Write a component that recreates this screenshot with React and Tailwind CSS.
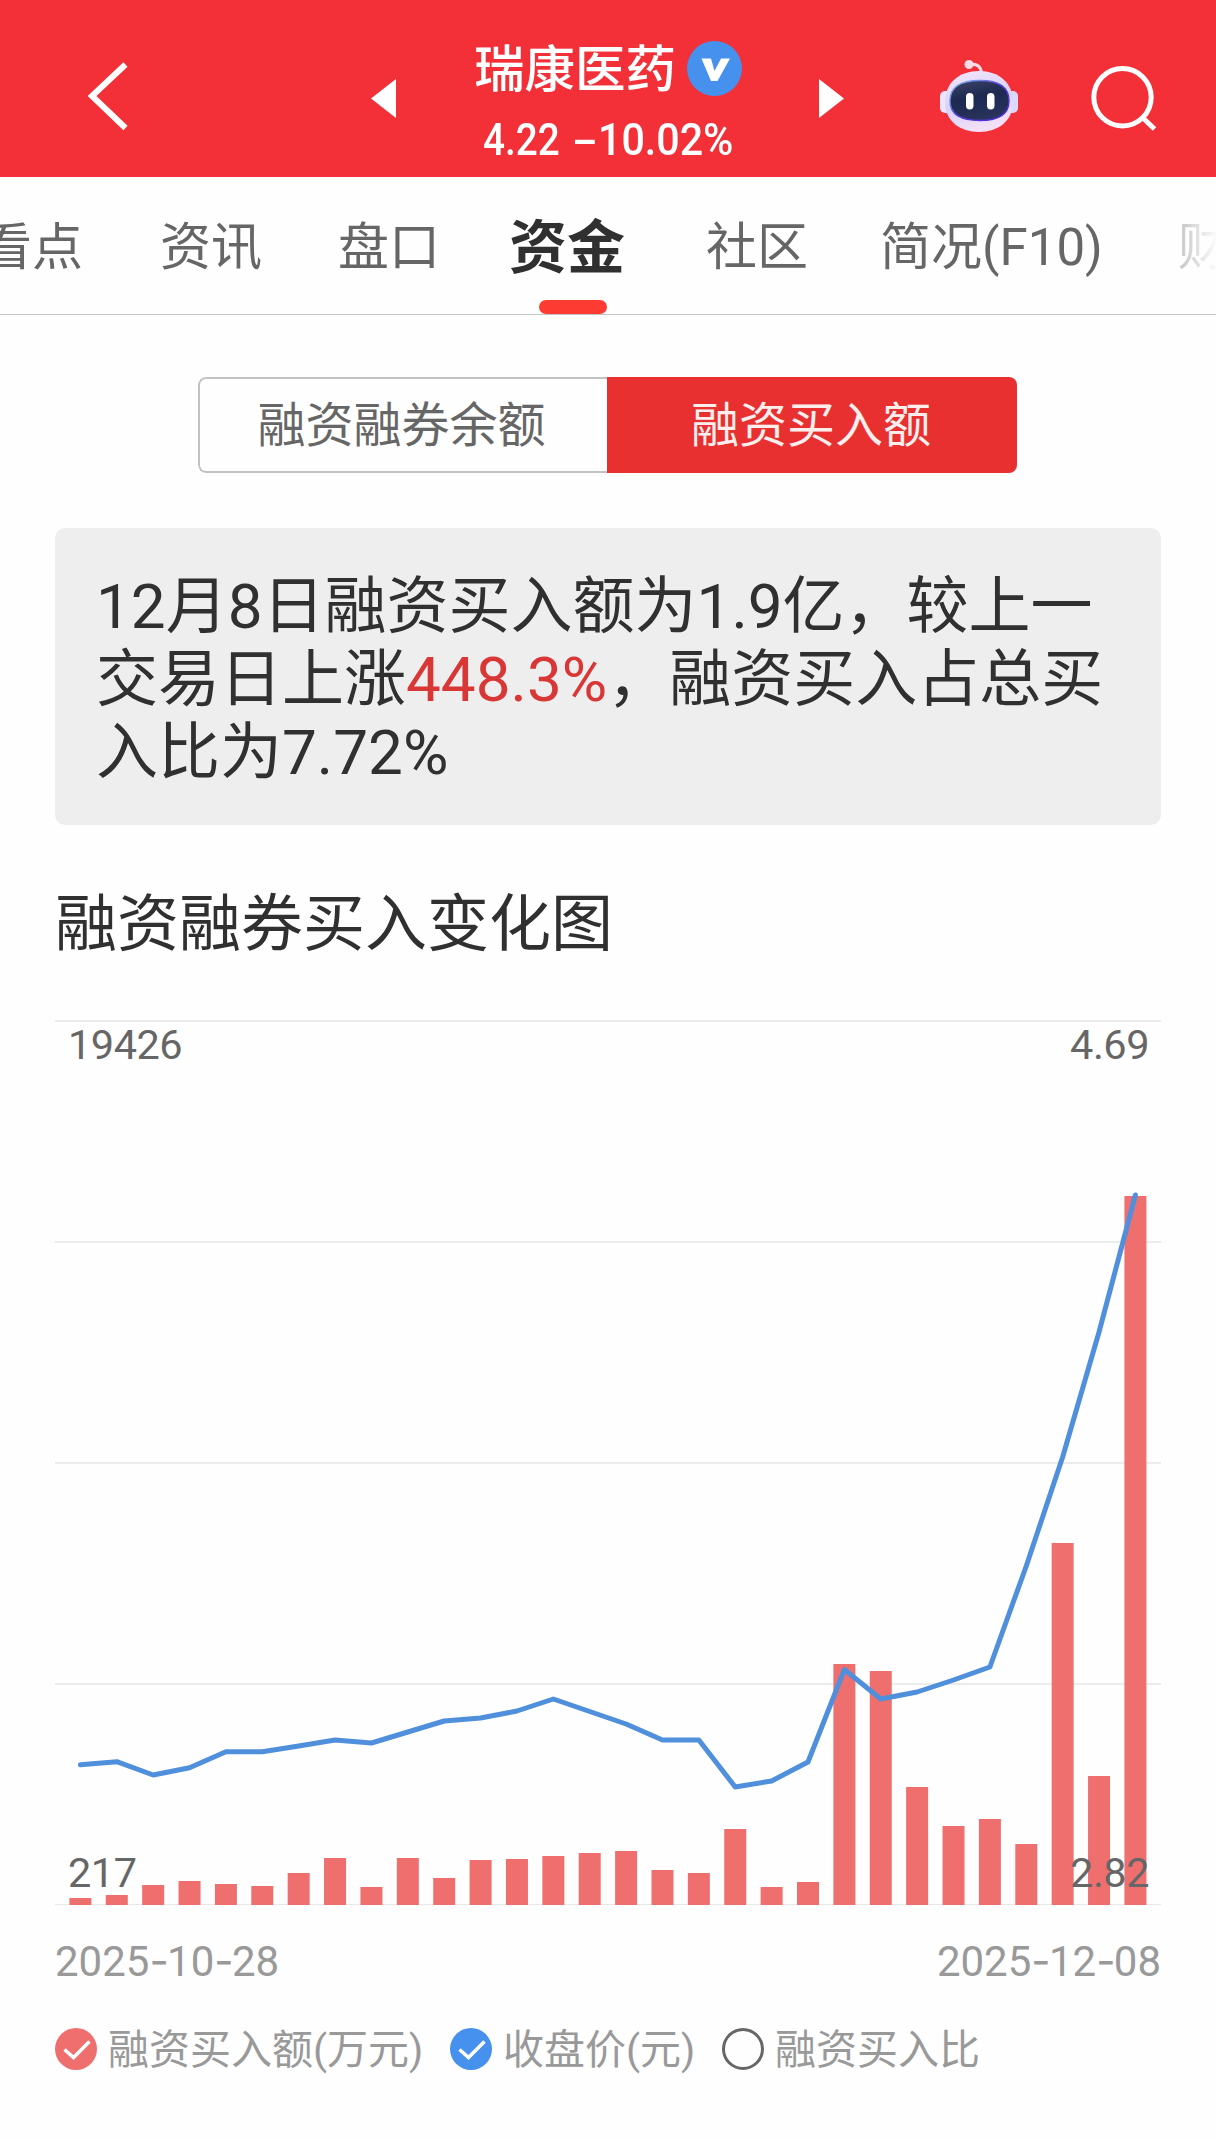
import React from "react";

const FONT = "font-['Roboto','Noto_Sans_CJK_SC',sans-serif]";

const TABS = [
  { label: "看点", cls: "-ml-[19px]" },
  { label: "资讯", cls: "ml-[77px]" },
  { label: "盘口", cls: "ml-[76px]" },
  { label: "资金", cls: "ml-[69px]", active: true },
  { label: "社区", cls: "ml-[81px]" },
  { label: "简况(F10)", cls: "ml-[72px]" },
];

const BASE = 884;
const FIRST = 25.4;
const STEP = 36.38;
const BAR_HEIGHTS = [
  7, 10, 20, 24, 21, 19, 32, 47, 18, 47, 27, 45, 46, 49, 52, 54, 35, 32, 76, 18,
  23, 241, 234, 118, 79, 86, 61, 362, 129, 709,
];
const PRICE_Y = [
  744.7, 741.7, 755, 747.7, 731.7, 731.7, 726, 720, 723, 712, 701, 698, 691,
  679, 691.5, 704, 720, 720, 767, 761, 742, 649.5, 679, 672, 660, 647, 546, 437,
  312, 175,
];

function Header() {
  return (
    <header className="flex h-[177px] items-start bg-[#f32f37] text-white">
      <svg className="ml-[84px] mt-[58px] h-[76px] w-[48px]" viewBox="0 0 48 76" fill="none" stroke="currentColor" strokeWidth="6">
        <path d="M41.500 6.500 L8 38 L41.500 70" />
      </svg>
      <svg className="ml-[239px] mt-[79px] h-[39px] w-[25px]" viewBox="0 0 25 39" fill="currentColor">
        <path d="M25 0V39L0 19.500Z" />
      </svg>
      <div className="ml-[78px] flex w-[272px] flex-col">
        <div className="mt-[40px] flex h-[56px] items-center">
          <h1 className="pt-[4px] text-[50.5px] leading-[56px] font-medium whitespace-nowrap">瑞康医药</h1>
          <svg className="ml-[11px] h-[55px] w-[55px] shrink-0" viewBox="0 0 55 55">
            <circle cx="27.500" cy="27.500" r="27.500" fill="#4690ee" />
            <path d="M14.500 17.500H24L27.500 30L34 17.500H43L30.500 40H24Z" fill="#fff" />
          </svg>
        </div>
        <div className="mt-[18px] ml-[9px] flex h-[52px] items-center text-[45px] leading-[52px] font-medium whitespace-nowrap">
          <span className="w-[91px] origin-left scale-x-[0.86]">4.22</span>
          <span className="w-[27px] origin-left scale-x-[1.7]">-</span>
          <span className="origin-left scale-x-[0.915]">10.02%</span>
        </div>
      </div>
      <svg className="ml-[73px] mt-[79px] h-[39px] w-[25px]" viewBox="0 0 25 39" fill="currentColor">
        <path d="M0 0V39L25 19.500Z" />
      </svg>
      <svg className="ml-[93px] mt-[58px] h-[78px] w-[84px]" viewBox="0 0 84 78">
        <defs>
          <linearGradient id="shell" x1="0" y1="0" x2="0.3" y2="1">
            <stop offset="0" stopColor="#f6e6fb" />
            <stop offset="0.6" stopColor="#d6d3f8" />
            <stop offset="1" stopColor="#f3e0f6" />
          </linearGradient>
          <linearGradient id="rim" x1="0" y1="0" x2="1" y2="1">
            <stop offset="0" stopColor="#86c8ee" />
            <stop offset="0.5" stopColor="#5a3ee0" />
            <stop offset="1" stopColor="#4c2ad0" />
          </linearGradient>
          <linearGradient id="visor" x1="0" y1="0" x2="0.3" y2="1">
            <stop offset="0" stopColor="#3d4569" />
            <stop offset="0.5" stopColor="#1d2950" />
            <stop offset="1" stopColor="#28325c" />
          </linearGradient>
        </defs>
        <path d="M32 7C39 5 44 8 44.500 15" fill="none" stroke="#fbdbe6" strokeWidth="3" />
        <circle cx="32" cy="6.500" r="4.500" fill="#fbdbe6" />
        <rect x="3" y="33" width="12" height="22" rx="5" fill="#eee4fc" />
        <rect x="69" y="33" width="12" height="22" rx="5" fill="#dcd8fb" />
        <path d="M42 13C62 13 76 25 76 44C76 63 61 74 42 74C23 74 8 63 8 44C8 25 22 13 42 13Z" fill="url(#shell)" />
        <path d="M43 22.500C61 22.500 72 28 72 43C72 57 61 62.500 43 62.500C24 62.500 13 57 13 43C13 28 24 22.500 43 22.500Z" fill="url(#visor)" stroke="url(#rim)" strokeWidth="1.400" />
        <rect x="29" y="35" width="7.500" height="16.500" rx="3.700" fill="#fff" />
        <rect x="50" y="35" width="7.500" height="16.500" rx="3.700" fill="#fff" />
      </svg>
      <svg className="ml-[69px] mt-[62px] h-[72px] w-[72px]" viewBox="0 0 72 72" fill="none" stroke="currentColor" strokeWidth="5">
        <circle cx="32.500" cy="35.300" r="28.700" />
        <path d="M52 55L64.500 67" />
      </svg>
    </header>
  );
}

function Tabs() {
  return (
    <nav className="flex h-[138px] items-start overflow-hidden border-b border-[#c4c4c4] text-[51px] leading-[60px] whitespace-nowrap text-[#666]">
      {TABS.map((t) =>
        t.active ? (
          <div key={t.label} className={`${t.cls} flex shrink-0 flex-col items-center`}>
            <span className="mt-[41px] text-[58px] leading-[60px] font-bold text-[#303030]">{t.label}</span>
            <span className="mt-[22px] ml-[11px] h-[14px] w-[68px] rounded-full bg-[#fe3b32]" />
          </div>
        ) : (
          <span key={t.label} className={`${t.cls} mt-[41px] shrink-0`}>{t.label}</span>
        )
      )}
      <span className="mt-[41px] ml-[75px] shrink-0 bg-linear-to-r from-[#c4c4c4] to-white to-80% bg-clip-text text-transparent">财</span>
    </nav>
  );
}

function Chart() {
  const points = PRICE_Y.map((y, i) => `${FIRST + i * STEP},${y}`).join(" ");
  return (
    <div className="relative mt-[57px] h-[886px] text-[41.5px] leading-[44px] tracking-[-0.500px] text-[#666]">
      <svg className="block h-[886px] w-[1106px]" viewBox="0 0 1106 886" fill="none">
        {[0, 221, 442, 663].map((y) => (
          <path key={y} d={`M0 ${y + 1}H1106`} stroke="#ececec" strokeWidth="2" />
        ))}
        <path d="M0 884.500H1106" stroke="#e8e8e8" />
        {BAR_HEIGHTS.map((h, i) => (
          <rect key={i} x={FIRST + i * STEP - 11} y={BASE - h + 1} width="22" height={h} fill="#ef6f6f" />
        ))}
        <polyline points={points} stroke="#4f8fdc" strokeWidth="5" strokeLinejoin="round" strokeLinecap="round" />
      </svg>
      <span className="absolute top-[3px] left-[13px]">19426</span>
      <span className="absolute top-[3px] right-[12px]">4.69</span>
      <span className="absolute bottom-[11px] left-[13px]">217</span>
      <span className="absolute right-[12px] bottom-[11px]">2.82</span>
    </div>
  );
}

function DateLabel({ parts }) {
  return (
    <span>
      {parts.map((p, i) => (
        <React.Fragment key={i}>
          {i > 0 && <span className="font-['Inter',sans-serif] tracking-[-1.700px]">-</span>}
          {p}
        </React.Fragment>
      ))}
    </span>
  );
}

function Check({ className }) {
  return (
    <span className={`flex h-[42px] w-[42px] shrink-0 items-center justify-center rounded-full ${className}`}>
      <svg className="h-[42px] w-[42px]" viewBox="0 0 42 42" fill="none" stroke="#fff" strokeWidth="3.500">
        <path d="M9.500 21.500L18.500 29.500L34.500 13.500" />
      </svg>
    </span>
  );
}

export default function App() {
  return (
    <div lang="zh-CN" className={`h-[2140px] w-[1216px] overflow-hidden bg-[#fefefe] ${FONT}`}>
      <Header />
      <Tabs />
      <main className="px-[55px]">
        <div className="mt-[62px] ml-[143px] flex h-[96px] w-[819px] overflow-hidden rounded-[8px] text-[48px]">
          <button className="flex w-[409px] items-center justify-center rounded-l-[8px] border-2 border-r-0 border-[#c2c2c2] pt-[2px] pr-[4px] text-[#666]">融资融券余额</button>
          <button className="flex w-[410px] items-center justify-center bg-[#e83030] pt-[2px] pr-[2px] text-[#fdeeee]">融资买入额</button>
        </div>
        <section className="mt-[55px] h-[297px] rounded-[10px] bg-[#eee] pt-[42px] pl-[41px] text-[62px] leading-[73px] whitespace-nowrap text-[#303030]">
          <p>12月8日融资买入额为1.9亿，较上一</p>
          <p>
            交易日上涨<span className="text-[#d93636]">448.3%</span>，融资买入占总买
          </p>
          <p>入比为7.72%</p>
        </section>
        <h2 className="mt-[62px] text-[62px] leading-[76px] text-[#303030]">融资融券买入变化图</h2>
        <Chart />
        <div className="mt-[31px] flex justify-between text-[42px] leading-[48px] text-[#999]">
          <DateLabel parts={["2025", "10", "28"]} />
          <DateLabel parts={["2025", "12", "08"]} />
        </div>
        <div className="mt-[38px] flex items-center text-[41px] leading-[48px] whitespace-nowrap text-[#999]">
          <Check className="bg-[#ef6e6e]" />
          <span className="ml-[11px] w-[342px] pt-[2px]">融资买入额(万元)</span>
          <Check className="bg-[#4690ee]" />
          <span className="ml-[11px] w-[219px] pt-[2px]">收盘价(元)</span>
          <span className="h-[42px] w-[42px] shrink-0 rounded-full border-3 border-[#666]" />
          <span className="ml-[11px] pt-[2px]">融资买入比</span>
        </div>
      </main>
    </div>
  );
}
